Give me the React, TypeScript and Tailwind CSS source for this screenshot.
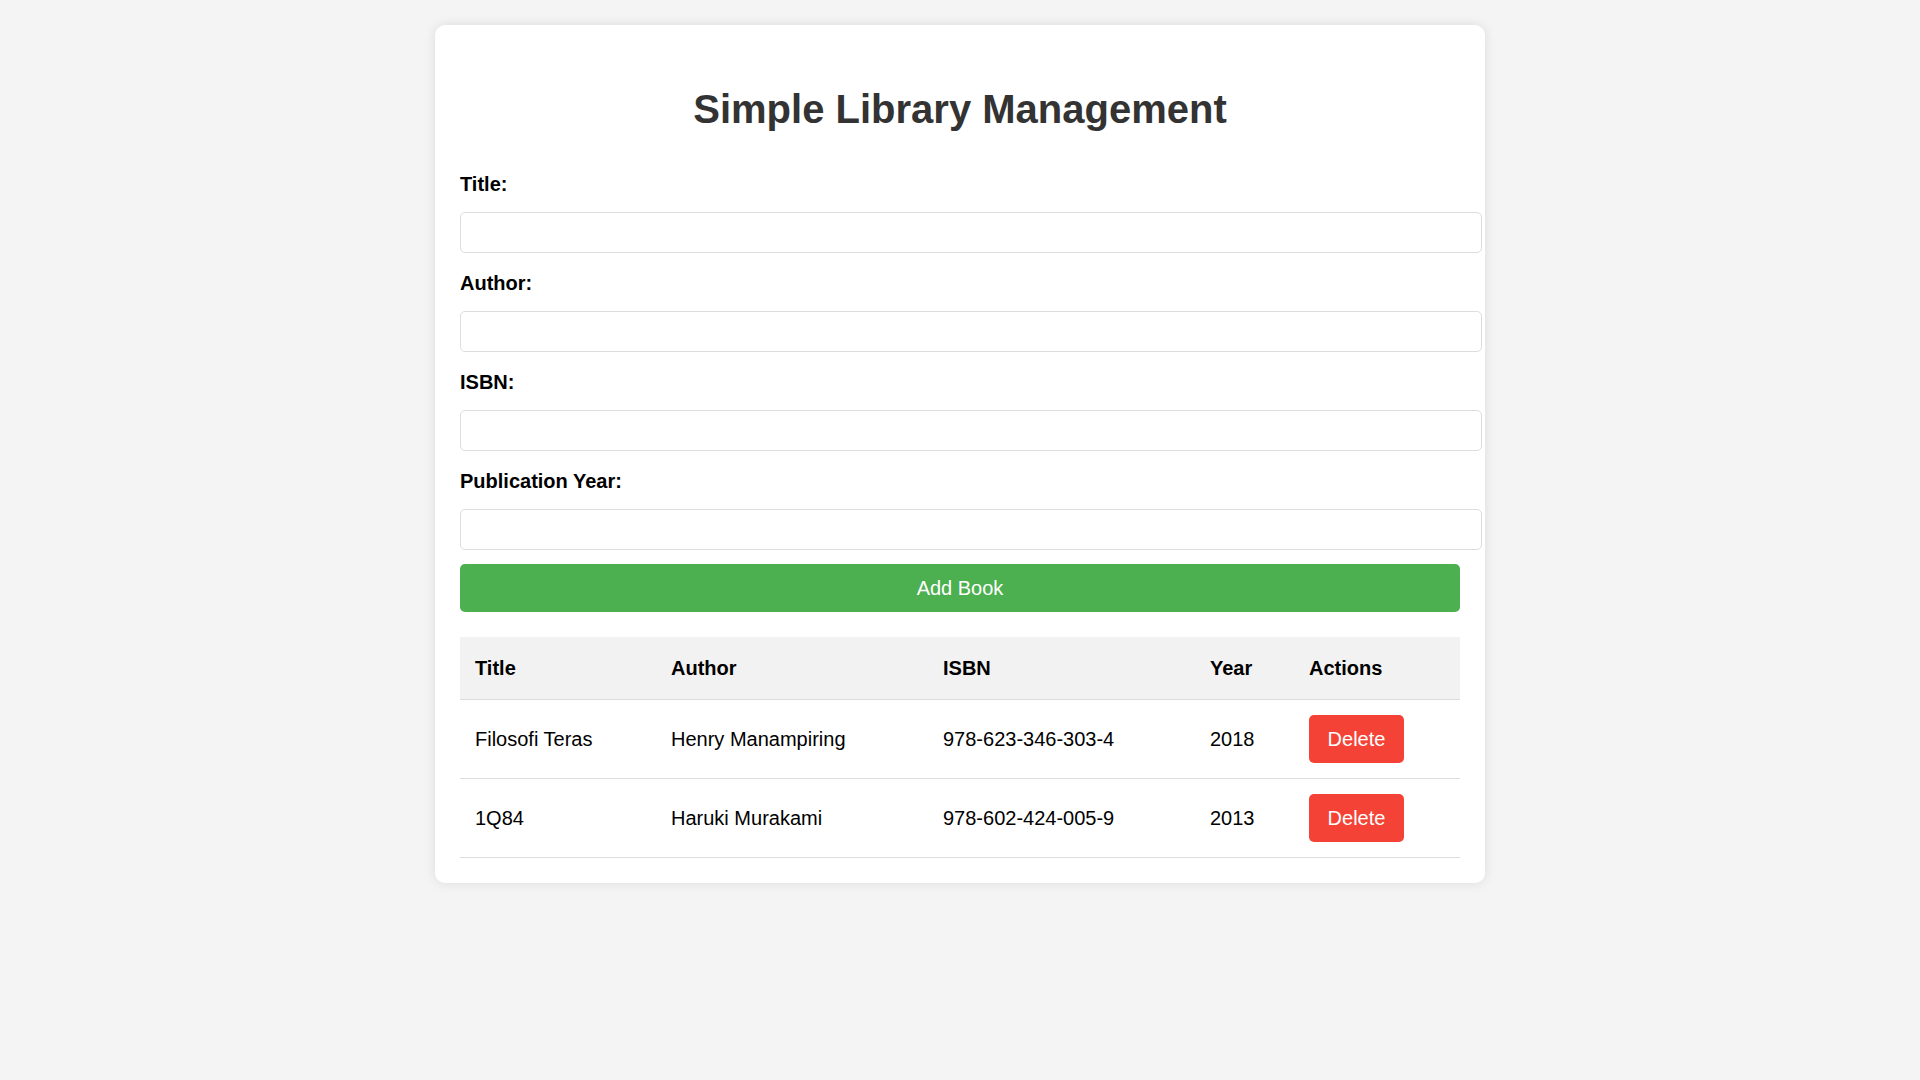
import React, { useState } from "react";

interface Book {
  id: number;
  title: string;
  author: string;
  isbn: string;
  year: string;
}

const initialBooks: Book[] = [
  { id: 1, title: "Filosofi Teras", author: "Henry Manampiring", isbn: "978-623-346-303-4", year: "2018" },
  { id: 2, title: "1Q84", author: "Haruki Murakami", isbn: "978-602-424-005-9", year: "2013" },
];

const cols = "grid grid-cols-[196px_272px_267px_99px_166px] items-center border-b border-[#ddd]";

function Field({ label, value, onChange, first }: { label: string; value: string; onChange: (v: string) => void; first?: boolean }) {
  return (
    <div className="flex flex-col">
      <label className={`block font-bold text-[20px] leading-[23px] text-black mb-[16px] ${first ? "mt-[41px]" : "mt-[5px]"}`}>
        {label}
      </label>
      <input
        value={value}
        onChange={(e) => onChange(e.target.value)}
        className="block w-[1022px] h-[41px] px-[10px] mb-[14px] border border-[#ddd] rounded-[5px] bg-white text-[17px] outline-none"
      />
    </div>
  );
}

export default function App() {
  const [books, setBooks] = useState<Book[]>(initialBooks);
  const [title, setTitle] = useState("");
  const [author, setAuthor] = useState("");
  const [isbn, setIsbn] = useState("");
  const [year, setYear] = useState("");

  const addBook = () => {
    if (!title.trim() || !author.trim()) return;
    setBooks([...books, { id: Date.now(), title, author, isbn, year }]);
    setTitle("");
    setAuthor("");
    setIsbn("");
    setYear("");
  };

  const removeBook = (id: number) => setBooks(books.filter((b) => b.id !== id));

  return (
    <div className="min-h-screen bg-[#f4f4f4] pt-[25px] pb-[25px] font-['Liberation_Sans',Arial,sans-serif]">
      <div className="mx-auto w-[1050px] p-[25px] bg-white rounded-[10px] shadow-[0_0_12px_rgba(0,0,0,0.1)]">
        <h1 className="mt-[36px] text-center text-[40px] leading-[46px] font-bold text-[#333]">
          Simple Library Management
        </h1>

        <Field label="Title:" value={title} onChange={setTitle} first />
        <Field label="Author:" value={author} onChange={setAuthor} />
        <Field label="ISBN:" value={isbn} onChange={setIsbn} />
        <Field label="Publication Year:" value={year} onChange={setYear} />

        <button
          onClick={addBook}
          className="block w-full h-[48px] rounded-[5px] bg-[#4caf50] text-white text-[20px] leading-[23px] cursor-pointer"
        >
          Add Book
        </button>

        <div className="mt-[25px] text-[20px] leading-[23px] text-black">
          <div className={`${cols} h-[63px] bg-[#f2f2f2] font-bold`}>
            <div className="px-[15px]">Title</div>
            <div className="px-[15px]">Author</div>
            <div className="px-[15px]">ISBN</div>
            <div className="px-[15px]">Year</div>
            <div className="px-[15px]">Actions</div>
          </div>
          {books.map((b) => (
            <div key={b.id} className={`${cols} h-[79px]`}>
              <div className="px-[15px]">{b.title}</div>
              <div className="px-[15px]">{b.author}</div>
              <div className="px-[15px]">{b.isbn}</div>
              <div className="px-[15px]">{b.year}</div>
              <div className="px-[15px]">
                <button
                  onClick={() => removeBook(b.id)}
                  className="w-[95px] h-[48px] rounded-[5px] bg-[#f44336] text-white text-[20px] cursor-pointer"
                >
                  Delete
                </button>
              </div>
            </div>
          ))}
        </div>
      </div>
    </div>
  );
}
